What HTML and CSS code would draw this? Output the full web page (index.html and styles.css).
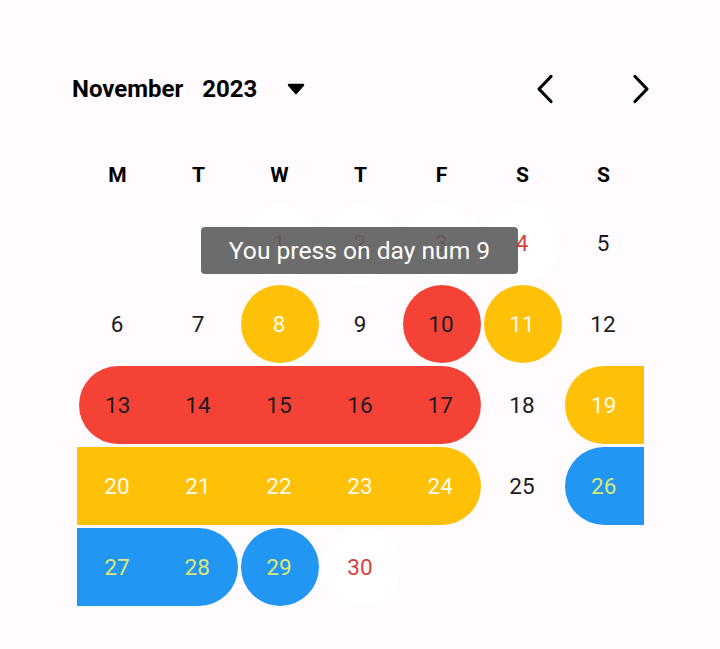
FILE: index.html
```html
<!DOCTYPE html>
<html>
<head>
<meta charset="utf-8">
<link rel="stylesheet" href="styles.css">
</head>
<body>
<div class="cal">
  <div class="header">
    <div class="title">
      <span>November</span>
      <span>2023</span>
      <svg class="drop" width="18" height="12" viewBox="0 0 18 12"><polygon points="2,2 16,2 9,10" fill="#000" stroke="#000" stroke-width="2.5" stroke-linejoin="round"/></svg>
    </div>
    <div class="navs">
      <div class="nav"><svg width="18" height="30" viewBox="0 0 18 30"><polyline points="15,2.5 3,15 15,27.5" fill="none" stroke="#000" stroke-width="3.2" stroke-linecap="round" stroke-linejoin="round"/></svg></div>
      <div class="nav"><svg width="18" height="30" viewBox="0 0 18 30"><polyline points="3,2.5 15,15 3,27.5" fill="none" stroke="#000" stroke-width="3.2" stroke-linecap="round" stroke-linejoin="round"/></svg></div>
    </div>
  </div>
  <div class="weekdays">
    <span>M</span><span>T</span><span>W</span><span>T</span><span>F</span><span>S</span><span>S</span>
  </div>
  <div class="days">
    <div class="c"></div>
    <div class="c"></div>
    <div class="c"><div class="s circle off">1</div></div>
    <div class="c"><div class="s circle off">2</div></div>
    <div class="c"><div class="s circle off">3</div></div>
    <div class="c"><div class="s circle off">4</div></div>
    <div class="c"><div class="s">5</div></div>

    <div class="c"><div class="s">6</div></div>
    <div class="c"><div class="s">7</div></div>
    <div class="c"><div class="s circle yellow">8</div></div>
    <div class="c"><div class="s">9</div></div>
    <div class="c"><div class="s circle red">10</div></div>
    <div class="c"><div class="s circle yellow">11</div></div>
    <div class="c"><div class="s">12</div></div>

    <div class="c"><div class="s start red">13</div></div>
    <div class="c"><div class="s mid red">14</div></div>
    <div class="c"><div class="s mid red">15</div></div>
    <div class="c"><div class="s mid red">16</div></div>
    <div class="c"><div class="s end red">17</div></div>
    <div class="c"><div class="s">18</div></div>
    <div class="c"><div class="s start yellow">19</div></div>

    <div class="c"><div class="s mid yellow">20</div></div>
    <div class="c"><div class="s mid yellow">21</div></div>
    <div class="c"><div class="s mid yellow">22</div></div>
    <div class="c"><div class="s mid yellow">23</div></div>
    <div class="c"><div class="s end yellow">24</div></div>
    <div class="c"><div class="s">25</div></div>
    <div class="c"><div class="s start blue">26</div></div>

    <div class="c"><div class="s mid blue">27</div></div>
    <div class="c"><div class="s end blue">28</div></div>
    <div class="c"><div class="s circle blue">29</div></div>
    <div class="c"><div class="s circle off">30</div></div>
    <div class="c"></div>
    <div class="c"></div>
    <div class="c"></div>
  </div>
  <div class="tooltip">You press on day num 9</div>
</div>
</body>
</html>
```
FILE: styles.css
```css
html, body {
  margin: 0;
  padding: 0;
  background: #fffbfe;
}
body {
  font-family: Roboto, "Noto Sans", sans-serif;
  color: #1d1b20;
}
.cal {
  position: relative;
  width: 720px;
  height: 649px;
}
.header {
  display: flex;
  justify-content: space-between;
  align-items: center;
  height: 48px;
  padding-top: 65px;
  padding-left: 72px;
  padding-right: 55px;
}
.title {
  display: flex;
  align-items: center;
  gap: 19px;
  font-size: 24px;
  font-weight: 700;
  color: #000;
}
.drop {
  margin-left: 11px;
}
.navs {
  display: flex;
  gap: 48px;
}
.nav {
  width: 48px;
  height: 48px;
  display: flex;
  align-items: center;
  justify-content: center;
}
.weekdays {
  display: grid;
  grid-template-columns: repeat(7, 81px);
  margin-top: 35px;
  margin-left: 77px;
  height: 54px;
  align-items: center;
  justify-items: center;
  font-size: 21px;
  font-weight: 700;
  color: #000;
}
.days {
  display: grid;
  grid-template-columns: repeat(7, 81px);
  grid-auto-rows: 81px;
  margin-left: 77px;
  margin-top: 0.5px;
}
.c {
  display: flex;
}
.s {
  flex: 1;
  margin: 1.5px;
  display: flex;
  align-items: center;
  justify-content: center;
  font-size: 22.5px;
  color: #1d1b20;
  padding-right: 1px;
}
.circle {
  border-radius: 50%;
}
.start {
  margin-right: 0;
  border-radius: 39px 0 0 39px;
}
.mid {
  margin-left: 0;
  margin-right: 0;
}
.end {
  margin-left: 0;
  border-radius: 0 39px 39px 0;
}
.off {
  background: #ffffff;
  color: #d6413a;
}
.red {
  background: #f44336;
  color: #1d1b20;
}
.yellow {
  background: #ffc107;
  color: #fffbf0;
}
.blue {
  background: #2196f3;
  color: #dde774;
}
.tooltip {
  position: absolute;
  left: 201px;
  top: 227px;
  width: 317px;
  height: 47px;
  border-radius: 4px;
  background: rgba(92, 92, 92, 0.9);
  color: #fff;
  font-size: 24.6px;
  display: flex;
  align-items: center;
  justify-content: center;
}
```
